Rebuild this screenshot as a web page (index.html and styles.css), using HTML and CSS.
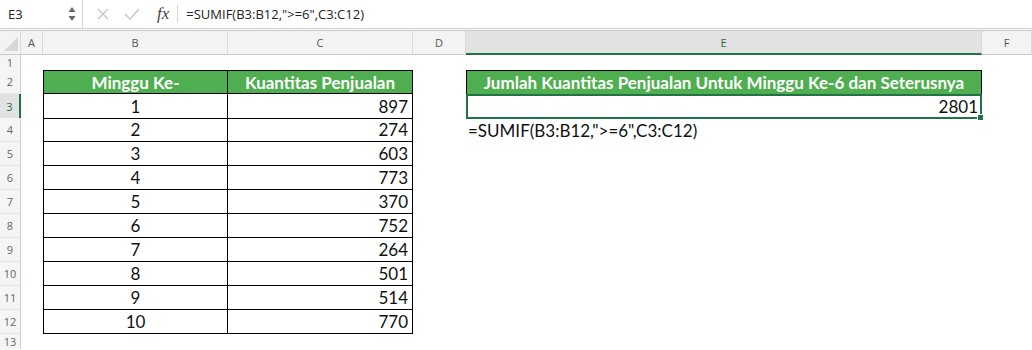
FILE: index.html
```html
<!DOCTYPE html>
<html lang="en">
<head>
    <meta charset="UTF-8">
    <title>SUMIF Minggu Ke-6</title>
    <link rel="stylesheet" href="styles.css">
</head>
<body>
    <div class="formula-bar">
        <div class="name-box">
            <span>E3</span>
            <span class="spin">
                <svg width="8" height="16" viewBox="0 0 8 16"><path d="M4 1 L7.5 6 H0.5 Z" fill="#6b6b6b"/><path d="M4 15 L7.5 10 H0.5 Z" fill="#6b6b6b"/></svg>
            </span>
        </div>
        <div class="tools">
            <svg width="12" height="12" viewBox="0 0 12 12"><path d="M1 1 L11 11 M11 1 L1 11" stroke="#c4c4c4" stroke-width="1.3"/></svg>
            <svg width="16" height="12" viewBox="0 0 16 12"><path d="M1 6 L6 11 L15 1" stroke="#c4c4c4" stroke-width="1.3" fill="none"/></svg>
            <span class="fx">fx</span>
        </div>
        <div class="formula">=SUMIF(B3:B12,"&gt;=6",C3:C12)</div>
    </div>

    <div class="sheet">
        <div class="row head">
            <div class="corner"><svg width="14" height="14" viewBox="0 0 14 14"><path d="M14 0 V14 H0 Z" fill="#d6d6d6"/></svg></div>
            <div class="col">A</div>
            <div class="col">B</div>
            <div class="col">C</div>
            <div class="col">D</div>
            <div class="col active">E</div>
            <div class="col">F</div>
        </div>
        <div class="row short">
            <div class="num">1</div>
        </div>
        <div class="row">
            <div class="num">2</div><div></div>
            <div class="cell th first top">Minggu Ke-</div>
            <div class="cell th top">Kuantitas Penjualan</div>
            <div></div>
            <div class="cell th box">Jumlah Kuantitas Penjualan Untuk Minggu Ke-6 dan Seterusnya</div>
        </div>
        <div class="row">
            <div class="num active">3</div><div></div>
            <div class="cell first mid">1</div><div class="cell val">897</div>
            <div></div>
            <div class="cell val selected">2801</div>
        </div>
        <div class="row">
            <div class="num">4</div><div></div>
            <div class="cell first mid">2</div><div class="cell val">274</div>
            <div></div>
            <div class="plain">=SUMIF(B3:B12,"&gt;=6",C3:C12)</div>
        </div>
        <div class="row">
            <div class="num">5</div><div></div>
            <div class="cell first mid">3</div><div class="cell val">603</div>
        </div>
        <div class="row">
            <div class="num">6</div><div></div>
            <div class="cell first mid">4</div><div class="cell val">773</div>
        </div>
        <div class="row">
            <div class="num">7</div><div></div>
            <div class="cell first mid">5</div><div class="cell val">370</div>
        </div>
        <div class="row">
            <div class="num">8</div><div></div>
            <div class="cell first mid">6</div><div class="cell val">752</div>
        </div>
        <div class="row">
            <div class="num">9</div><div></div>
            <div class="cell first mid">7</div><div class="cell val">264</div>
        </div>
        <div class="row">
            <div class="num">10</div><div></div>
            <div class="cell first mid">8</div><div class="cell val">501</div>
        </div>
        <div class="row">
            <div class="num">11</div><div></div>
            <div class="cell first mid">9</div><div class="cell val">514</div>
        </div>
        <div class="row">
            <div class="num">12</div><div></div>
            <div class="cell first mid">10</div><div class="cell val">770</div>
        </div>
        <div class="row short">
            <div class="num">13</div>
        </div>
    </div>
</body>
</html>
```

FILE: styles.css
```css
body {
    margin: 0;
    background: #fff;
    font-family: Lato, "Open Sans", sans-serif;
    overflow: hidden;
}
.formula-bar {
    display: flex;
    align-items: center;
    height: 28px;
    border-bottom: 1px solid #d0d0d0;
    font-family: "Open Sans", "Liberation Sans", sans-serif;
    font-size: 13px;
    color: #222;
}
.name-box {
    width: 83px;
    height: 100%;
    box-sizing: border-box;
    border-right: 1px solid #d6d6d6;
    display: flex;
    align-items: center;
    justify-content: space-between;
    padding: 0 6px 0 8px;
}
.spin {
    display: flex;
}
.tools {
    display: flex;
    align-items: center;
    gap: 15px;
    padding-left: 14px;
    height: 18px;
    padding-right: 8px;
    border-right: 1px solid #d6d6d6;
}
.fx {
    font-family: "Liberation Serif", serif;
    font-style: italic;
    font-size: 17px;
    color: #444;
    margin-left: 2px;
}
.formula {
    padding-left: 8px;
}
.sheet {
    border-top: 1px solid #fafafa;
}
.row {
    display: grid;
    grid-template-columns: 21px 22px 185px 185px 53px 516px 1fr;
    height: 24px;
}
.row.short {
    height: 15px;
}
.head {
    height: 24px;
    background: #f3f3f3;
    border-top: 1px solid #c9c9c9;
}
.corner {
    display: flex;
    align-items: flex-end;
    justify-content: flex-end;
    padding: 0 2px 3px 0;
    border-right: 1px solid #dadada;
    border-bottom: 1px solid #c9c9c9;
}
.col {
    display: flex;
    align-items: center;
    justify-content: center;
    font-family: "Open Sans", "Liberation Sans", sans-serif;
    font-size: 11px;
    color: #555;
    border-right: 1px solid #dadada;
    border-bottom: 1px solid #c9c9c9;
}
.col.active {
    background: #e2e2e2;
    color: #1e6b3a;
    border-bottom: 2px solid #217346;
}
.num {
    display: flex;
    align-items: center;
    justify-content: center;
    background: #f5f5f5;
    font-family: "Open Sans", "Liberation Sans", sans-serif;
    font-size: 11px;
    color: #666;
    border-right: 1px solid #d0d0d0;
    border-bottom: 1px solid #e4e4e4;
}
.num.active {
    background: #e2e2e2;
    color: #217346;
    border-right: 2px solid #217346;
}
.cell {
    display: flex;
    align-items: center;
    font-size: 17px;
    color: #111;
    box-sizing: border-box;
    border-right: 1px solid #000;
    border-bottom: 1px solid #000;
    white-space: nowrap;
}
.cell.first {
    border-left: 1px solid #000;
}
.cell.top {
    border-top: 1px solid #000;
}
.th {
    justify-content: center;
    background: #4fae50;
    color: #fff;
    font-weight: bold;
    font-size: 17px;
}
.th.box {
    border: 1px solid #000;
    border-bottom: none;
}
.mid {
    justify-content: center;
}
.val {
    justify-content: flex-end;
    padding-right: 4px;
}
.selected {
    position: relative;
    border: 2px solid #217346;
    padding-right: 2px;
}
.selected::after {
    content: "";
    position: absolute;
    right: -4px;
    bottom: -4px;
    width: 5px;
    height: 5px;
    background: #217346;
    border: 1px solid #fff;
}
.plain {
    display: flex;
    align-items: center;
    font-size: 17px;
    color: #111;
    white-space: nowrap;
    padding-left: 2px;
}
```
